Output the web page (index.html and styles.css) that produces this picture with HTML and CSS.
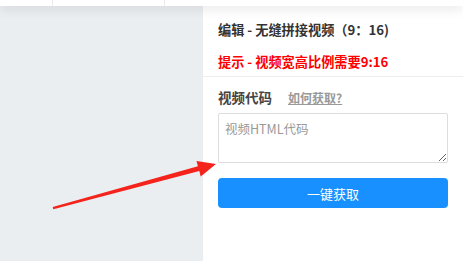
FILE: index.html
```html
<!DOCTYPE html>
<html lang="zh-CN">
<head>
    <meta charset="UTF-8">
    <meta name="viewport" content="width=device-width, initial-scale=1.0">
    <title>无缝拼接视频</title>
    <link rel="stylesheet" href="styles.css">
</head>
<body>
    <div class="topbar">
        <div class="tab tab-a"></div>
        <div class="tab tab-b"></div>
        <div class="tab"></div>
    </div>
    <div class="main">
        <div class="canvas"></div>
        <div class="panel">
            <div class="panel-head">
                <h3 class="title">编辑 - 无缝拼接视频（9：16)</h3>
                <p class="tip">提示 - 视频宽高比例需要9:16</p>
            </div>
            <div class="panel-body">
                <div class="field-label">
                    <span>视频代码</span>
                    <a href="#" class="help">如何获取?</a>
                </div>
                <textarea class="code" placeholder="视频HTML代码"></textarea>
                <button class="fetch">一键获取</button>
            </div>
        </div>
    </div>

    <svg class="arrow" width="463" height="261" viewBox="0 0 463 261">
        <polygon points="52.7,207 197.9,166.3 196.5,161 216,164 200.7,176.4 199.3,171.1 53.3,209.2" fill="#f4231b"/>
    </svg>
</body>
</html>
```

FILE: styles.css
```css
body {
    margin: 0;
    height: 261px;
    overflow: hidden;
    font-family: "Noto Sans CJK SC", "Noto Sans", sans-serif;
    background-color: #ebeef1;
    position: relative;
}
.topbar {
    display: flex;
    height: 6px;
    background-color: #fff;
    position: relative;
    z-index: 2;
    box-shadow: 0 2px 12px rgba(0, 0, 0, 0.14);
}
.tab {
    flex: 1;
    border-right: 1px solid #eaeaea;
}
.tab-a {
    flex: none;
    width: 52px;
}
.tab-b {
    flex: none;
    width: 111px;
}
.tab:last-child {
    border-right: none;
}
.main {
    display: flex;
    height: 255px;
}
.canvas {
    width: 203px;
    flex: none;
}
.panel {
    flex: 1;
    background-color: #fff;
}
.panel-head {
    padding: 14px 15px 4px;
    border-bottom: 1px solid #eee;
}
.title {
    margin: 0;
    font-size: 13.2px;
    line-height: 20px;
    font-weight: bold;
    color: #333;
}
.tip {
    margin: 12px 0 0;
    font-size: 13.2px;
    line-height: 20px;
    font-weight: bold;
    color: #ff0000;
}
.panel-body {
    padding: 10px 15px;
}
.field-label {
    display: flex;
    align-items: baseline;
    gap: 16px;
    font-size: 13.5px;
    line-height: 20px;
    font-weight: bold;
    color: #444;
}
.help {
    font-size: 12px;
    color: #999;
    text-decoration: underline;
}
.code {
    display: block;
    width: 100%;
    height: 50px;
    margin-top: 5px;
    padding: 5px 6px;
    box-sizing: border-box;
    border: 1px solid #ddd;
    border-radius: 2px;
    font-family: inherit;
    font-size: 12.5px;
    resize: vertical;
}
.code::placeholder {
    color: #999;
}
.fetch {
    display: block;
    width: 100%;
    height: 30px;
    margin-top: 15px;
    border: none;
    border-radius: 4px;
    background-color: #1890ff;
    color: #fff;
    font-family: inherit;
    font-size: 13px;
    cursor: pointer;
}
.arrow {
    position: absolute;
    left: 0;
    top: 0;
    z-index: 3;
    pointer-events: none;
}
```
